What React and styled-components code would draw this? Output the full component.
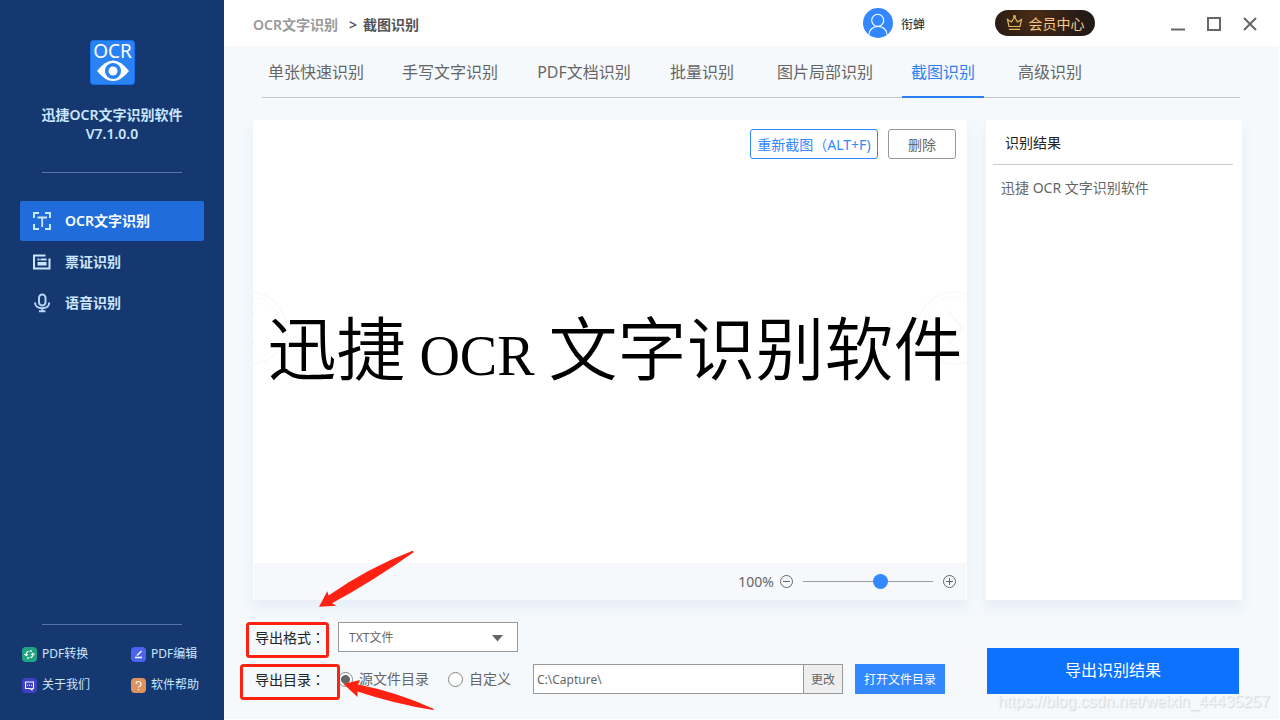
import React, { useState } from 'react';
import styled, { createGlobalStyle, css } from 'styled-components';

const GlobalStyle = createGlobalStyle`
  *, *::before, *::after { box-sizing: border-box; }
  body { margin: 0; background: #fff; }
  body, button, input, select {
    font-family: "Noto Sans", "Noto Sans CJK SC", sans-serif;
  }
  button, input, select { margin: 0; padding: 0; border: 0; background: none; }
  button { cursor: pointer; white-space: nowrap; }
  svg { display: block; flex: none; }
`;

const App = styled.div`
  display: flex;
  min-height: 100vh;
  color: #666;
  font-size: 14px;
  line-height: 20px;
`;

/* ---------- sidebar ---------- */

const Sidebar = styled.aside`
  flex: 0 0 224px;
  display: flex;
  flex-direction: column;
  padding: 40px 20px 25px;
  background: #163871;
  color: #cbe6ff;
`;

const Brand = styled.h1`
  display: flex;
  flex-direction: column;
  align-items: center;
  margin: 0 0 29px;
  font-size: 14px;
  font-weight: 600;
  line-height: 19px;
  text-align: center;
`;

const Logo = styled.svg`
  margin-bottom: 20px;
  overflow: visible;
`;

const Divider = styled.hr`
  width: 140px;
  height: 1px;
  margin: 0 auto;
  border: 0;
  background: #5673ab;
`;

const SideNav = styled.nav`
  display: flex;
  flex-direction: column;
  gap: 1px;
  margin: 28px 0 auto;
`;

const SideLink = styled.a`
  display: flex;
  align-items: center;
  gap: 13px;
  height: 40px;
  padding-left: 12px;
  border-radius: 2px;
  color: ${(p) => (p.$active ? '#fff' : '#cbe6ff')};
  background: ${(p) => (p.$active ? '#206cdb' : 'transparent')};
  font-weight: 600;
  text-decoration: none;
`;

const ToolLinks = styled.nav`
  display: grid;
  grid-template-columns: 109px auto;
  row-gap: 11px;
  margin: 19px 0 0 2px;
`;

const ToolLink = styled.a`
  display: flex;
  align-items: center;
  gap: 5px;
  color: #cbe6ff;
  font-size: 12px;
  text-decoration: none;
  white-space: nowrap;
`;

/* ---------- top bar ---------- */

const Main = styled.main`
  flex: 1;
  min-width: 0;
  display: flex;
  flex-direction: column;
  border: solid #fff;
  border-width: 0 1px 1px 0;
  background: #f5f9fc;
`;

const TopBar = styled.header`
  display: flex;
  align-items: center;
  height: 46px;
  padding: 0 21px 0 29px;
  background: #fff;
`;

const Crumbs = styled.div`
  display: flex;
  gap: 6px;
  margin-right: auto;
  padding-top: 3px;
  font-weight: 600;
  color: #555;
`;

const CrumbLink = styled.a`
  margin-right: 5px;
  color: #999;
  text-decoration: none;
`;

const User = styled.div`
  display: flex;
  align-items: center;
  gap: 8px;
  margin-right: 70px;
  color: #222;
  font-size: 12px;
`;

const UserName = styled.span`
  padding-top: 4px;
`;

const VipButton = styled.button`
  display: flex;
  align-items: center;
  justify-content: center;
  gap: 6px;
  width: 100px;
  height: 26px;
  margin-right: 75px;
  border-radius: 13px;
  background: radial-gradient(circle at 40% 20%, #4a2c14, #241a16 75%);
  color: #f7c88c;
  font-size: 14px;
`;

const WindowButtons = styled.div`
  display: flex;
  gap: 20px;
  padding-top: 2px;
`;

/* ---------- tabs ---------- */

const TabBar = styled.nav`
  display: flex;
  gap: 20px;
  height: 52px;
  margin: 0 39px 22px 38px;
  border-bottom: 1px solid #c3c8cc;
`;

const Tab = styled.button`
  min-width: ${(p) => (p.$short ? '82px' : '114px')};
  height: 52px;
  padding: 2px 9px 0;
  border-bottom: 2px solid ${(p) => (p.$active ? '#2d7ff9' : 'transparent')};
  color: ${(p) => (p.$active ? '#2d7ff9' : '#666')};
  font-size: 16px;
  line-height: 24px;
  &:first-child { margin-left: -3px; }
  ${(p) => p.$short && css`margin-right: 5px;`}
`;

/* ---------- workspace ---------- */

const Workspace = styled.section`
  flex: 1;
  display: grid;
  grid-template-columns: minmax(0, 1fr) 256px;
  gap: 19px;
  padding: 0 37px 0 29px;
`;

const Panel = styled.section`
  display: flex;
  flex-direction: column;
  background: #fff;
  box-shadow: 0 8px 12px #e6edf6;
`;

const PreviewTools = styled.div`
  display: flex;
  justify-content: flex-end;
  gap: 10px;
  padding: 9px 11px 0;
`;

const OutlineButton = styled.button`
  width: ${(p) => (p.$primary ? '128px' : '68px')};
  height: 30px;
  border: 1px solid ${(p) => (p.$primary ? '#3388ff' : '#999')};
  border-radius: 3px;
  color: ${(p) => (p.$primary ? '#3388ff' : '#666')};
  font-size: 14px;
`;

const Canvas = styled.div`
  position: relative;
  flex: 1;
  display: flex;
  align-items: center;
  justify-content: center;
  padding: 0 0 14px 10px;
  overflow: hidden;
`;

const Captured = styled.p`
  position: relative;
  margin: 0;
  color: #000;
  font-family: "Liberation Serif", "Noto Sans CJK SC", serif;
  font-size: 69px;
  font-weight: 350;
  line-height: 80px;
  white-space: nowrap;
`;

const Latin = styled.span`
  font-size: 56px;
  white-space: pre;
`;

const Ring = styled.svg`
  position: absolute;
  top: 132px;
  ${(p) => p.$side}: ${(p) => (p.$side === 'left' ? '-40px' : '-24px')};
`;

const ZoomBar = styled.div`
  display: flex;
  align-items: center;
  justify-content: flex-end;
  gap: 10px;
  height: 37px;
  margin: 0 1px;
  padding-right: 10px;
  background: #f6f8fc;
`;

const ZoomValue = styled.output`
  margin-right: -4px;
`;

const IconButton = styled.button`
  display: block;
`;

const Slider = styled.input`
  appearance: none;
  width: 130px;
  height: 15px;
  background: linear-gradient(#999, #999) center / 100% 1px no-repeat;
  &::-webkit-slider-thumb {
    appearance: none;
    width: 15px;
    height: 15px;
    border-radius: 50%;
    background: #3388ff;
  }
`;

const ResultTitle = styled.h2`
  margin: 0 9px 0 7px;
  padding: 13px 12px 11px;
  border-bottom: 1px solid #ccc;
  color: #222;
  font-size: 14px;
  font-weight: 400;
`;

const ResultText = styled.p`
  margin: 0;
  padding: 13px 15px;
`;

/* ---------- export form ---------- */

const Footer = styled.footer`
  position: relative;
  display: grid;
  grid-template-columns: minmax(0, 1fr) 252px;
  align-items: end;
  gap: 20px;
  padding: 22px 40px 25px 29px;
`;

const ExportForm = styled.form`
  position: relative;
  display: flex;
  flex-direction: column;
  gap: 12px;
`;

const FormRow = styled.div`
  display: flex;
  align-items: center;
  height: 30px;
`;

const FieldLabel = styled.label`
  flex: none;
  width: 85px;
  padding-left: 2px;
  color: #222;
`;

const Colon = styled.span`
  font-family: "Noto Sans CJK TC", sans-serif;
`;

const SelectBox = styled.div`
  position: relative;
  width: 180px;
  height: 30px;
`;

const Select = styled.select`
  appearance: none;
  width: 100%;
  height: 100%;
  padding: 0 10px;
  border: 1px solid #999;
  background: #fff;
  color: #666;
  font-size: 12px;
`;

const Caret = styled.svg`
  position: absolute;
  top: 13px;
  right: 15px;
  pointer-events: none;
`;

const RadioLabel = styled.label`
  display: flex;
  align-items: center;
  gap: 6px;
  margin-right: ${(p) => p.$after};
  white-space: nowrap;
`;

const Radio = styled.input`
  appearance: none;
  width: 15px;
  height: 15px;
  border: 1px solid #888;
  border-radius: 50%;
  background: #fff;
  &:checked { background: radial-gradient(circle, #666 4px, #fff 5px); }
`;

const PathField = styled.div`
  display: flex;
  width: 310px;
  height: 30px;
  margin-right: 12px;
  border: 1px solid #999;
`;

const PathInput = styled.input`
  flex: 1;
  min-width: 0;
  padding: 0 3px;
  background: #fff;
  color: #666;
  font-size: 12px;
`;

const ChangeButton = styled.button`
  width: 39px;
  border-left: 1px solid #999;
  background: #eee;
  color: #666;
  font-size: 12px;
`;

const SolidButton = styled.button`
  width: ${(p) => (p.$large ? '100%' : '90px')};
  height: ${(p) => (p.$large ? '46px' : '30px')};
  padding-bottom: ${(p) => (p.$large ? '4px' : '0')};
  background: ${(p) => (p.$large ? '#0d72ff' : '#3388ff')};
  color: #fff;
  font-size: ${(p) => (p.$large ? '16px' : '12px')};
`;

const Markup = styled.svg`
  position: absolute;
  top: -80px;
  left: -16px;
  pointer-events: none;
`;

const Watermark = styled.div`
  position: absolute;
  right: 9px;
  bottom: 6px;
  color: #f3f5f7;
  font-family: "Liberation Sans", sans-serif;
  font-size: 16px;
  line-height: 22px;
  text-shadow: 1px 1px 1px #d0d3d7;
  pointer-events: none;
`;

/* ---------- icons ---------- */

const LogoMark = () => (
  <Logo width="45" height="45" viewBox="0 0 45 45" aria-hidden="true">
    <rect x="0.5" y="0.5" width="44" height="44" rx="3" fill="#2a82f5" stroke="#1470ee" />
    <text x="22.5" y="18" textAnchor="middle" fill="#fff" fontFamily="Noto Sans, sans-serif" fontSize="19" fontWeight="400">OCR</text>
    <path d="M7 31Q15 20.500 23 20.500T39 31Q31 41 23 41T7 31Z" fill="#fff" />
    <circle cx="23" cy="31" r="8" fill="#2a82f5" />
    <circle cx="23" cy="31" r="4.500" fill="#fff" />
  </Logo>
);

const ScanTextIcon = () => (
  <svg width="20" height="20" viewBox="0 0 20 20" fill="none" stroke="#cbe6ff" strokeWidth="2" aria-hidden="true">
    <path d="M2 7V2h5M13 2h5v5M18 13v5h-5M7 18H2v-5" />
    <path d="M5.500 6.500h9.500M10.200 6.500V16" strokeWidth="1.800" />
  </svg>
);

const TicketIcon = () => (
  <svg width="20" height="20" viewBox="0 0 20 20" aria-hidden="true">
    <path d="M13.500 3.500H2v13h15.500V6.500" fill="none" stroke="#cbe6ff" strokeWidth="2" />
    <path d="M5.500 6.500h2v2h-2zM8.500 6.500h6v2h-6zM5.500 10h9v3.500h-9z" fill="#cbe6ff" />
  </svg>
);

const MicIcon = () => (
  <svg width="20" height="20" viewBox="0 0 20 20" fill="none" stroke="#b8d6f5" strokeWidth="2" aria-hidden="true">
    <rect x="7" y="1.500" width="6.500" height="11" rx="3.250" />
    <path d="M3 9.500c0 3.500 3 5.800 7.250 5.800s7-2.300 7-5.800M10.250 15.500V18M7 18.200h6.500" />
  </svg>
);

const TOOL_GLYPHS = {
  convert: { fill: '#1fa383', body: <path d="M6.500 4.300Q4.200 4.800 4.200 8M2.500 7.200l1.700 1.600L6 7.200M5 11q1.500.3 2.300-.6M8.500 10.700q2.300-.5 2.300-3.700M9 7.800l1.800-1.600 1.700 1.600M10 4q-1.500-.3-2.300.6" /> },
  edit: { fill: '#4b64ee', body: <path d="M4 10.500h7M6 8.500 10.500 4" strokeWidth="1.400" /> },
  about: { fill: '#3f3fc4', body: <path d="M3.500 4h8v6.500h-1.500v1.500L8 10.500H3.500zM5 7.200h1M7 7.200h1M9 7.200h1" /> },
  help: { fill: '#df925c', body: <path d="M5 6a2.500 2.500 0 1 1 3.600 2.200Q7.500 8.600 7.500 9.500M7.500 11v1.200" /> },
};

const ToolIcon = ({ name }) => (
  <svg width="15" height="15" viewBox="0 0 15 15" aria-hidden="true">
    <rect width="15" height="15" rx="4" fill={TOOL_GLYPHS[name].fill} />
    <g fill="none" stroke="#fff" strokeWidth="1.100">{TOOL_GLYPHS[name].body}</g>
  </svg>
);

const AvatarIcon = () => (
  <svg width="30" height="30" viewBox="0 0 30 30" aria-hidden="true">
    <circle cx="15" cy="15" r="15" fill="#3388ff" />
    <g fill="none" stroke="#fff" strokeWidth="1.100">
      <circle cx="14.700" cy="12.300" r="6" />
      <path d="M6 26.800c0-5 3.800-8.300 9-8.300s9 3.300 9 8.300" />
    </g>
  </svg>
);

const CrownIcon = () => (
  <svg width="17" height="16" viewBox="0 0 17 16" fill="none" stroke="#e5b95f" strokeWidth="1.200" aria-hidden="true">
    <path d="M3 11.500 1.500 4.500 5.500 7 8.500 2l3 5 4-2.500-1.500 7zM3 14.300h11" />
    <circle cx="8.500" cy="1.500" r="0.800" />
  </svg>
);

const ZoomIcon = ({ plus }) => (
  <svg width="13" height="13" viewBox="0 0 13 13" fill="none" stroke="#666" aria-hidden="true">
    <circle cx="6.500" cy="6.500" r="6" />
    <path d={plus ? 'M3 6.500h7M6.500 3v7' : 'M3 6.500h7'} />
  </svg>
);

const WindowIcon = ({ d }) => (
  <svg width="16" height="16" viewBox="0 0 16 16" fill="none" stroke="#666" strokeWidth="2" aria-hidden="true">
    <path d={d} />
  </svg>
);

const FadedArrow = ({ side }) => (
  <Ring $side={side} width="74" height="74" viewBox="0 0 74 74" fill="none" stroke="#fafafb" aria-hidden="true">
    <circle cx="37" cy="37" r="36" strokeWidth="2" />
    <circle cx="37" cy="37" r="31" />
    <path d={side === 'left' ? 'M43 20 28 37l15 17' : 'M31 20l15 17-15 17'} strokeWidth="3" />
  </Ring>
);

/* ---------- page ---------- */

const NAV = [
  ['OCR文字识别', ScanTextIcon],
  ['票证识别', TicketIcon],
  ['语音识别', MicIcon],
];
const TOOLS = [
  ['PDF转换', 'convert'],
  ['PDF编辑', 'edit'],
  ['关于我们', 'about'],
  ['软件帮助', 'help'],
];
const TABS = ['单张快速识别', '手写文字识别', 'PDF文档识别', '批量识别', '图片局部识别', '截图识别', '高级识别'];
const WINDOW = [
  ['最小化', 'M1 13.500h14'],
  ['最大化', 'M2 2h12v12H2z'],
  ['关闭', 'M2 2l12 12M14 2 2 14'],
];

export default function OcrApp() {
  const [tab, setTab] = useState('截图识别');
  const [zoom, setZoom] = useState(61);
  const [path, setPath] = useState('C:\\Capture\\');

  return (
    <App>
      <GlobalStyle />
      <Sidebar>
        <Brand>
          <LogoMark />
          <span>迅捷OCR文字识别软件</span>
          <span>V7.1.0.0</span>
        </Brand>
        <Divider />
        <SideNav>
          {NAV.map(([label, Icon], i) => (
            <SideLink key={label} href="#" $active={i === 0}>
              <Icon />
              {label}
            </SideLink>
          ))}
        </SideNav>
        <Divider />
        <ToolLinks>
          {TOOLS.map(([label, icon]) => (
            <ToolLink key={label} href="#">
              <ToolIcon name={icon} />
              {label}
            </ToolLink>
          ))}
        </ToolLinks>
      </Sidebar>

      <Main>
        <TopBar>
          <Crumbs>
            <CrumbLink href="#">OCR文字识别</CrumbLink>
            <span>&gt;</span>
            <span>截图识别</span>
          </Crumbs>
          <User>
            <AvatarIcon />
            <UserName>衔蝉</UserName>
          </User>
          <VipButton type="button">
            <CrownIcon />
            会员中心
          </VipButton>
          <WindowButtons>
            {WINDOW.map(([label, d]) => (
              <IconButton key={label} type="button" aria-label={label}>
                <WindowIcon d={d} />
              </IconButton>
            ))}
          </WindowButtons>
        </TopBar>

        <TabBar>
          {TABS.map((label) => (
            <Tab
              key={label}
              type="button"
              $active={label === tab}
              $short={label.length === 4}
              onClick={() => setTab(label)}
            >
              {label}
            </Tab>
          ))}
        </TabBar>

        <Workspace>
          <Panel>
            <PreviewTools>
              <OutlineButton type="button" $primary>重新截图（ALT+F)</OutlineButton>
              <OutlineButton type="button">删除</OutlineButton>
            </PreviewTools>
            <Canvas>
              <FadedArrow side="left" />
              <FadedArrow side="right" />
              <Captured>迅捷<Latin> OCR </Latin>文字识别软件</Captured>
            </Canvas>
            <ZoomBar>
              <ZoomValue>100%</ZoomValue>
              <IconButton type="button" aria-label="缩小"><ZoomIcon /></IconButton>
              <Slider type="range" aria-label="缩放" value={zoom} onChange={(e) => setZoom(e.target.value)} />
              <IconButton type="button" aria-label="放大"><ZoomIcon plus /></IconButton>
            </ZoomBar>
          </Panel>
          <Panel>
            <ResultTitle>识别结果</ResultTitle>
            <ResultText>迅捷 OCR 文字识别软件</ResultText>
          </Panel>
        </Workspace>

        <Footer>
          <ExportForm>
            <FormRow>
              <FieldLabel htmlFor="format">导出格式<Colon>：</Colon></FieldLabel>
              <SelectBox>
                <Select id="format"><option>TXT文件</option></Select>
                <Caret width="11" height="7" viewBox="0 0 11 7" aria-hidden="true">
                  <path d="M0 0h11L5.500 6.500z" fill="#666" />
                </Caret>
              </SelectBox>
            </FormRow>
            <FormRow>
              <FieldLabel htmlFor="path">导出目录<Colon>：</Colon></FieldLabel>
              <RadioLabel $after="19px">
                <Radio type="radio" name="target" defaultChecked />
                源文件目录
              </RadioLabel>
              <RadioLabel $after="22px">
                <Radio type="radio" name="target" />
                自定义
              </RadioLabel>
              <PathField>
                <PathInput id="path" type="text" value={path} onChange={(e) => setPath(e.target.value)} />
                <ChangeButton type="button">更改</ChangeButton>
              </PathField>
              <SolidButton type="button">打开文件目录</SolidButton>
            </FormRow>
            <Markup width="204" height="170" viewBox="0 0 204 170" fill="#ff2213" aria-hidden="true">
              <g fill="none" stroke="#ff2213" strokeWidth="3">
                <rect x="10.500" y="81.500" width="80" height="33" rx="2" />
                <rect x="4.500" y="123.500" width="97" height="33" rx="2" />
              </g>
              <path d="M82 64.700 90.300 49.300 91.500 53.500Q131 26 175.500 8.800L177 10Q136 39 95 61.300L99.500 63.700Z" />
              <path d="M106.500 142 123 138 121 142.500Q160 150 197 167L196 168Q158 162 120.500 149.500L120.500 155Z" />
            </Markup>
          </ExportForm>
          <SolidButton type="button" $large>导出识别结果</SolidButton>
          <Watermark>https://blog.csdn.net/weixin_44435257</Watermark>
        </Footer>
      </Main>
    </App>
  );
}
